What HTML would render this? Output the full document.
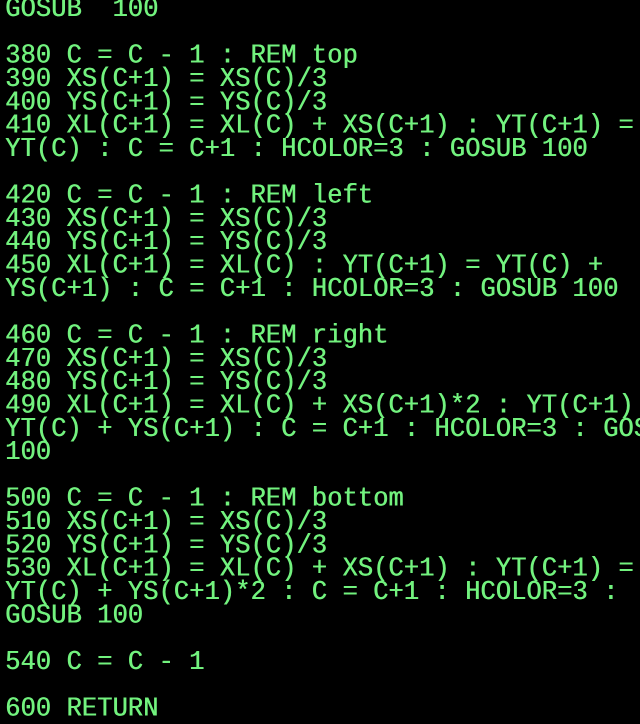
<!DOCTYPE html>
<html><head><style>
html,body{margin:0;padding:0;background:#000;width:640px;height:720px;overflow:hidden}
pre{position:absolute;left:5px;top:-2px;margin:0;font-family:"Liberation Mono",monospace;font-size:25.5px;line-height:22px;transform:scaleY(1.06);transform-origin:0 0;color:#72f27e;white-space:pre;letter-spacing:0.03px;text-shadow:0.5px 0 0 #72f27e}
</style></head><body><pre>GOSUB  100

380 C = C - 1 : REM top
390 XS(C+1) = XS(C)/3
400 YS(C+1) = YS(C)/3
410 XL(C+1) = XL(C) + XS(C+1) : YT(C+1) =
YT(C) : C = C+1 : HCOLOR=3 : GOSUB 100

420 C = C - 1 : REM left
430 XS(C+1) = XS(C)/3
440 YS(C+1) = YS(C)/3
450 XL(C+1) = XL(C) : YT(C+1) = YT(C) +
YS(C+1) : C = C+1 : HCOLOR=3 : GOSUB 100

460 C = C - 1 : REM right
470 XS(C+1) = XS(C)/3
480 YS(C+1) = YS(C)/3
490 XL(C+1) = XL(C) + XS(C+1)*2 : YT(C+1)
YT(C) + YS(C+1) : C = C+1 : HCOLOR=3 : GOS
100

500 C = C - 1 : REM bottom
510 XS(C+1) = XS(C)/3
520 YS(C+1) = YS(C)/3
530 XL(C+1) = XL(C) + XS(C+1) : YT(C+1) =
YT(C) + YS(C+1)*2 : C = C+1 : HCOLOR=3 :
GOSUB 100

540 C = C - 1

600 RETURN</pre></body></html>
